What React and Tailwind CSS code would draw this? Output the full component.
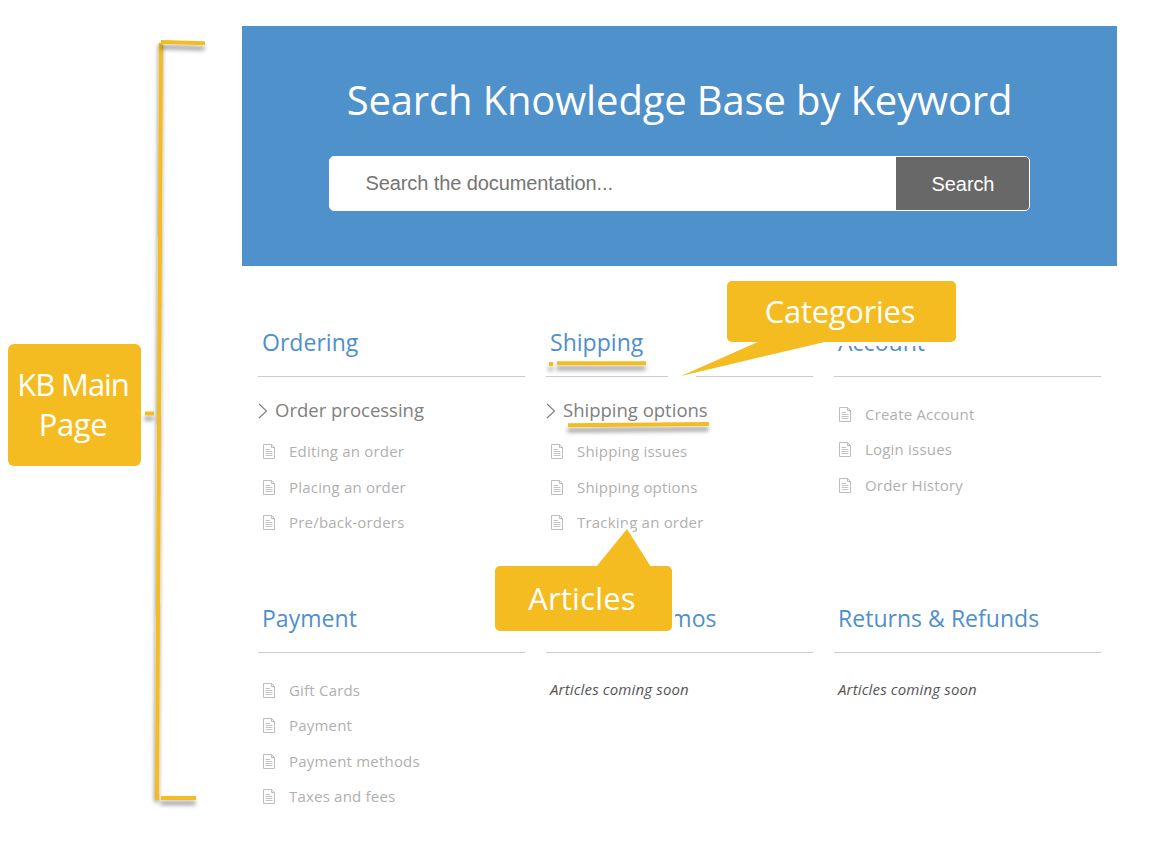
import React from "react";

const categories = [
  { title: "Ordering", sub: "Order processing", articles: ["Editing an order", "Placing an order", "Pre/back-orders"] },
  { title: "Shipping", sub: "Shipping options", articles: ["Shipping issues", "Shipping options", "Tracking an order"] },
  { title: "Account", articles: ["Create Account", "Login issues", "Order History"] },
  { title: "Payment", articles: ["Gift Cards", "Payment", "Payment methods", "Taxes and fees"] },
  { title: "Product Demos", articles: [] },
  { title: "Returns & Refunds", articles: [] },
];

function DocIcon() {
  return (
    <svg width="12" height="15" viewBox="0 0 12 15" fill="none" stroke="#bdbdbd" className="mt-px shrink-0">
      <path d="M0.5 0.5h8l3 3v11H0.5z" />
      <path d="M8.5 0.5v3h3" />
      <path d="M2.5 5.5h4.5M2.5 7.5h7M2.5 9.5h7M2.5 11.5h7" strokeWidth="0.9" />
    </svg>
  );
}

function Category({ title, sub, articles }) {
  return (
    <section className="h-[276px]">
      <h2 className="h-[51px] border-b border-[#cccccc] pl-[4px] text-[23px] leading-8 tracking-[0.03px] text-[#4f8fcb]">{title}</h2>
      {sub && (
        <div className="mt-[14.5px] mb-1.5 flex h-9 items-center text-[18.5px] text-[#808080]">
          <svg width="10" height="16" viewBox="0 0 10 16" fill="none" stroke="#808080" strokeWidth="1.2" className="mt-0.5 mr-[7px]">
            <path d="M1 1l7.5 7L1 15" />
          </svg>
          {sub}
        </div>
      )}
      {articles.length > 0 ? (
        <ul className={sub ? "" : "pt-[19px]"}>
          {articles.map((a) => (
            <li key={a} className="flex h-[35.5px] items-center gap-[14px] pl-[5px] text-[15px] tracking-[0.2px] text-[#b0b0b0]">
              <DocIcon />
              {a}
            </li>
          ))}
        </ul>
      ) : (
        <p className="pt-[18px] pl-1 text-[15px] leading-9 tracking-[0.15px] text-[#555555] italic">Articles coming soon</p>
      )}
    </section>
  );
}

function Annotations() {
  return (
    <>
      <svg className="absolute inset-0" width="1150" height="841" viewBox="0 0 1150 841" fill="none">
        <defs>
          <filter id="shadow" filterUnits="userSpaceOnUse" x="0" y="0" width="1150" height="841">
            <feDropShadow dx="-0.5" dy="5" stdDeviation="2" floodColor="#000" floodOpacity="0.4" />
          </filter>
          <filter id="sideShadow" filterUnits="userSpaceOnUse" x="0" y="0" width="1150" height="841">
            <feDropShadow dx="-0.5" dy="2" stdDeviation="2" floodColor="#000" floodOpacity="0.45" />
          </filter>
        </defs>
        <g fill="#fff">
          <path d="M723 277h237v69H830L696 375V379H668V375L750 342h-27z" />
          <path d="M627 524l30 40h18v69H491v-69h102z" />
        </g>
        <g stroke="#f4bc20" strokeWidth="4">
          <path filter="url(#sideShadow)" d="M161 43L157 800" />
          <g filter="url(#shadow)">
            <path d="M161 42l44 1.2M161 798h35M145 413.5h9" />
            <path d="M549 364h4M557 363.2h89M568 425.3l141-1.2" />
          </g>
        </g>
        <g fill="#f4bc20">
          <path d="M760 341L681 376 829 341z" />
          <path d="M596 567l31-38 24 38z" />
        </g>
      </svg>
      <div className="absolute top-[344px] left-2 flex h-[122px] w-[133px] items-center justify-center rounded-md bg-[#f4bc20] pr-[3px] pb-0.5 text-center text-[31px] leading-10 font-medium text-white">
        <span><span className="tracking-[-1.1px]">KB Main</span><br /><span className="tracking-[-0.4px]">Page</span></span>
      </div>
      <div className="absolute top-[281px] left-[727px] flex h-[61px] w-[229px] items-center justify-center rounded-[5px] bg-[#f4bc20] pr-[3px] text-[31px] font-medium tracking-[-0.3px] text-white">
        <span>Categories</span>
      </div>
      <div className="absolute top-[566px] left-[495px] flex h-[65px] w-[177px] items-center justify-center rounded-[5px] bg-[#f4bc20] pr-[3px] text-[31px] font-medium tracking-[0.2px] text-white">
        <span>Articles</span>
      </div>
    </>
  );
}

export default function App() {
  return (
    <div className="relative h-[841px] w-[1150px] overflow-hidden bg-white pt-[26px] pl-[242px] font-['Open_Sans',sans-serif]">
      <header className="flex h-60 w-[875px] flex-col items-center bg-[#4f91ca] pt-[49px]">
        <h1 className="h-[81px] text-[40px] leading-[50px] tracking-[-0.15px] whitespace-nowrap text-white">Search Knowledge Base by Keyword</h1>
        <div className="flex h-[55px] w-[701px] overflow-hidden rounded-[5px] border border-white bg-white font-['Liberation_Sans',sans-serif] text-[20px]">
          <div className="flex flex-1 items-center pb-0.5 pl-[35.5px] tracking-[-0.1px] text-[#757575]">Search the documentation...</div>
          <button className="w-[133px] bg-[#686868] pl-px tracking-[-0.1px] text-white">Search</button>
        </div>
      </header>
      <main className="ml-4 grid w-[843px] grid-cols-3 gap-x-[21px] pt-[60px]">
        {categories.map((c) => (
          <Category key={c.title} {...c} />
        ))}
      </main>
      <Annotations />
    </div>
  );
}
